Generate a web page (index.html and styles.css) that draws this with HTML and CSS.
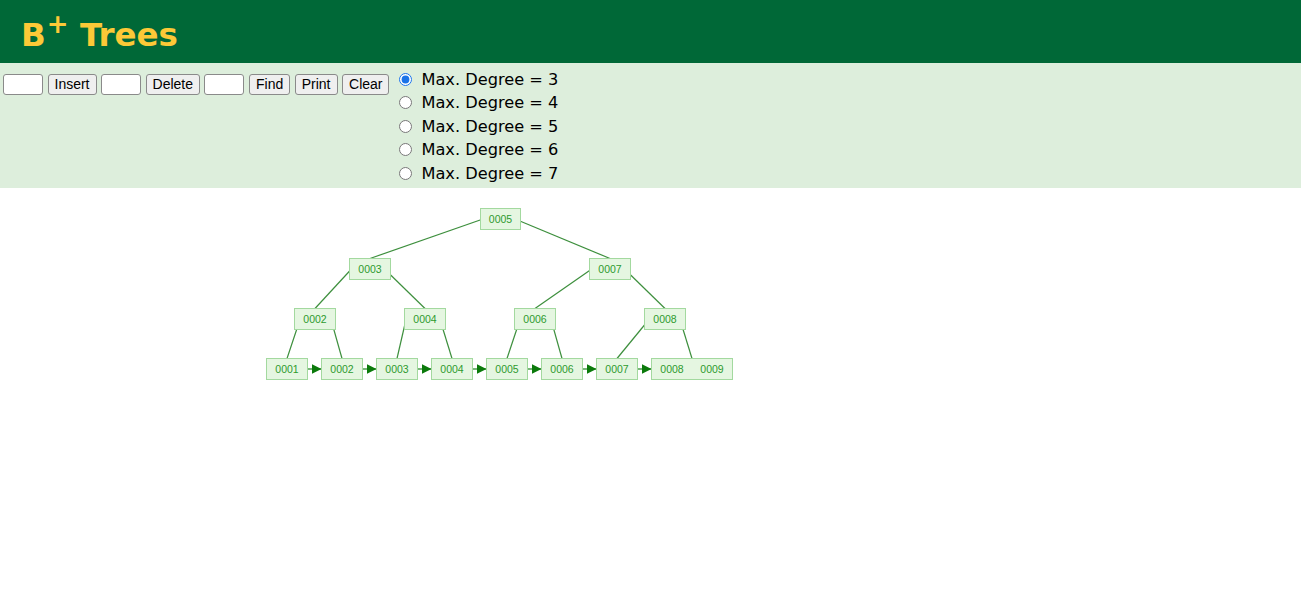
FILE: index.html
```html
<!DOCTYPE html>
<html>
<head>
<meta charset="utf-8">
<title>B+ Trees</title>
<link rel="stylesheet" href="styles.css">
</head>
<body>
<header class="banner">
  <h1 class="title">B<sup class="plus">+</sup> Trees</h1>
</header>
<section class="panel">
  <div class="tools">
    <input class="field" type="text">
    <button class="btn">Insert</button>
    <input class="field" type="text">
    <button class="btn">Delete</button>
    <input class="field" type="text">
    <button class="btn">Find</button>
    <button class="btn">Print</button>
    <button class="btn">Clear</button>
  </div>
  <div class="degrees">
    <label class="degree"><input class="radio" type="radio" name="deg" checked>Max. Degree = 3</label>
    <label class="degree"><input class="radio" type="radio" name="deg">Max. Degree = 4</label>
    <label class="degree"><input class="radio" type="radio" name="deg">Max. Degree = 5</label>
    <label class="degree"><input class="radio" type="radio" name="deg">Max. Degree = 6</label>
    <label class="degree"><input class="radio" type="radio" name="deg">Max. Degree = 7</label>
  </div>
</section>
<svg class="canvas" width="1301" height="414" viewBox="0 188 1301 414" xmlns="http://www.w3.org/2000/svg">
  <defs>
    <marker id="arrow" viewBox="0 0 10 10" refX="10" refY="5" markerWidth="10" markerHeight="10" markerUnits="userSpaceOnUse" orient="auto">
      <path d="M0,0 L10,5 L0,10 Z" class="head"/>
    </marker>
  </defs>
  <g class="edges">
    <line x1="483" y1="219" x2="370" y2="258.5"/>
    <line x1="515" y1="219" x2="610" y2="258.5"/>
    <line x1="351" y1="269.5" x2="315" y2="308.5"/>
    <line x1="385" y1="269.5" x2="425" y2="308.5"/>
    <line x1="591" y1="269.5" x2="535" y2="308.5"/>
    <line x1="625" y1="269.5" x2="665" y2="308.5"/>
    <line x1="300" y1="319.5" x2="287" y2="358.5"/>
    <line x1="331" y1="319.5" x2="342" y2="358.5"/>
    <line x1="406" y1="319.5" x2="397" y2="358.5"/>
    <line x1="440" y1="319.5" x2="452" y2="358.5"/>
    <line x1="520" y1="319.5" x2="507" y2="358.5"/>
    <line x1="551" y1="319.5" x2="562" y2="358.5"/>
    <line x1="649" y1="319.5" x2="617" y2="358.5"/>
    <line x1="680" y1="319.5" x2="692" y2="358.5"/>
  </g>
  <g class="links">
    <line x1="303" y1="369" x2="321.5" y2="369"/>
    <line x1="358" y1="369" x2="376.5" y2="369"/>
    <line x1="413" y1="369" x2="431.5" y2="369"/>
    <line x1="468" y1="369" x2="486.5" y2="369"/>
    <line x1="523" y1="369" x2="541.5" y2="369"/>
    <line x1="578" y1="369" x2="596.5" y2="369"/>
    <line x1="633" y1="369" x2="651.5" y2="369"/>
  </g>
  <g class="nodes">
    <rect x="480.5" y="208.5" width="40" height="21"/>
    <rect x="349.5" y="258.5" width="41" height="21"/>
    <rect x="589.5" y="258.5" width="41" height="21"/>
    <rect x="294.5" y="308.5" width="41" height="21"/>
    <rect x="404.5" y="308.5" width="41" height="21"/>
    <rect x="514.5" y="308.5" width="41" height="21"/>
    <rect x="644.5" y="308.5" width="41" height="21"/>
    <rect x="266.5" y="358.5" width="41" height="21"/>
    <rect x="321.5" y="358.5" width="41" height="21"/>
    <rect x="376.5" y="358.5" width="41" height="21"/>
    <rect x="431.5" y="358.5" width="41" height="21"/>
    <rect x="486.5" y="358.5" width="41" height="21"/>
    <rect x="541.5" y="358.5" width="41" height="21"/>
    <rect x="596.5" y="358.5" width="41" height="21"/>
    <rect x="651.5" y="358.5" width="81" height="21"/>
  </g>
  <g class="keys">
    <text x="500.5" y="219">0005</text>
    <text x="370" y="269">0003</text>
    <text x="610" y="269">0007</text>
    <text x="315" y="319">0002</text>
    <text x="425" y="319">0004</text>
    <text x="535" y="319">0006</text>
    <text x="665" y="319">0008</text>
    <text x="287" y="369">0001</text>
    <text x="342" y="369">0002</text>
    <text x="397" y="369">0003</text>
    <text x="452" y="369">0004</text>
    <text x="507" y="369">0005</text>
    <text x="562" y="369">0006</text>
    <text x="617" y="369">0007</text>
    <text x="672" y="369">0008</text>
    <text x="712" y="369">0009</text>
  </g>
</svg>
</body>
</html>
```
FILE: styles.css
```css
html, body {
  margin: 0;
  padding: 0;
  background: #ffffff;
}

.banner {
  height: 63px;
  background: #006837;
  display: flex;
  align-items: flex-start;
}

.title {
  margin: 0;
  padding: 15px 0 0 21px;
  font-family: "DejaVu Sans", Verdana, sans-serif;
  font-weight: bold;
  font-size: 32.5px;
  line-height: 40px;
  color: #fcc937;
}

.plus {
  font-size: 26px;
  line-height: 0;
  vertical-align: 0;
  position: relative;
  top: -13px;
  margin-left: 1px;
}

.panel {
  background: #ddeedc;
  display: flex;
  align-items: flex-start;
  height: 125px;
  box-sizing: border-box;
}

.tools {
  display: flex;
  align-items: center;
  gap: 4.5px;
  margin: 11px 0 0 3px;
}

.field {
  box-sizing: border-box;
  width: 40px;
  height: 21px;
  margin: 0;
  padding: 0 3px;
  background: #ffffff;
  border: 1px solid #8a8a8a;
  border-radius: 3px;
  font-family: "Liberation Sans", Arial, sans-serif;
  font-size: 13px;
}

.btn {
  box-sizing: border-box;
  height: 21px;
  margin: 0;
  padding: 0 6px;
  background: #efefef;
  border: 1px solid #8a8a8a;
  border-radius: 3px;
  font-family: "Liberation Sans", Arial, sans-serif;
  font-size: 14px;
  line-height: 19px;
  color: #000000;
}

.degrees {
  display: flex;
  flex-direction: column;
  margin: 4.25px 0 0 10px;
}

.degree {
  display: flex;
  align-items: center;
  height: 23.5px;
  font-family: "DejaVu Sans", Verdana, sans-serif;
  font-size: 16.2px;
  color: #000000;
}

.radio {
  width: 13px;
  height: 13px;
  margin: 0 9px 0 0;
  accent-color: #1a73e8;
}

.canvas {
  display: block;
}

.edges line {
  stroke: #3d8f3d;
  stroke-width: 1.2;
}

.links line {
  stroke: #2f8f2f;
  stroke-width: 1.3;
  marker-end: url(#arrow);
}

.head {
  fill: #0b7a0b;
}

.nodes rect {
  fill: #e5f6e1;
  stroke: #a3d99f;
  stroke-width: 1;
}

.keys text {
  font-family: "Liberation Sans", Arial, sans-serif;
  font-size: 10.5px;
  fill: #2e9a2e;
  text-anchor: middle;
  dominant-baseline: central;
}
```
